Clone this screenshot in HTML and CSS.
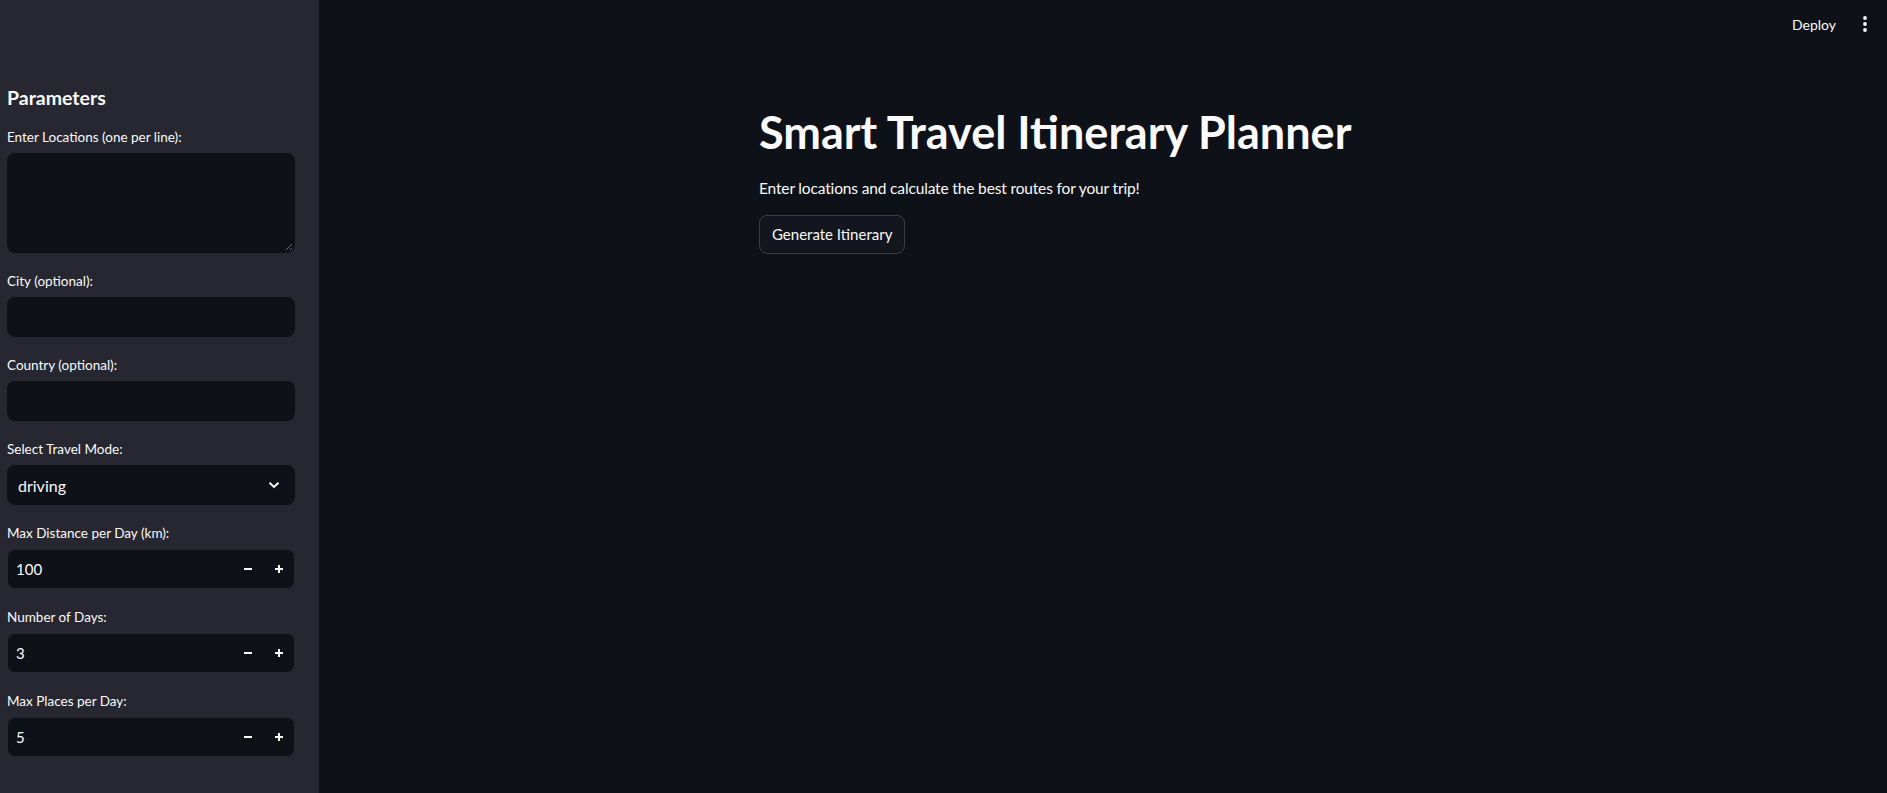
FILE: index.html
```html
<!DOCTYPE html>
<html lang="en">
<head>
<meta charset="utf-8">
<title>Smart Travel Itinerary Planner</title>
<link rel="stylesheet" href="styles.css">
</head>
<body>
<div class="app">
  <aside class="sidebar">
    <h2 class="side-title">Parameters</h2>
    <div class="fields">
      <div class="field">
        <label class="label">Enter Locations (one per line):</label>
        <div class="textarea"><span class="grip"></span></div>
      </div>
      <div class="field">
        <label class="label">City (optional):</label>
        <div class="input"></div>
      </div>
      <div class="field">
        <label class="label">Country (optional):</label>
        <div class="input"></div>
      </div>
      <div class="field">
        <label class="label">Select Travel Mode:</label>
        <div class="input select">
          <span class="select-value">driving</span>
          <svg class="chevron" width="12" height="8" viewBox="0 0 12 8"><path d="M1.5 1.8 L6 6 L10.5 1.8" fill="none" stroke="#fafafa" stroke-width="2"/></svg>
        </div>
      </div>
      <div class="field">
        <label class="label">Max Distance per Day (km):</label>
        <div class="number">
          <span class="num-value">100</span>
          <span class="step"><svg width="10" height="10" viewBox="0 0 10 10"><rect x="1" y="4" width="8" height="2" fill="#fafafa"/></svg></span>
          <span class="step"><svg width="10" height="10" viewBox="0 0 10 10"><rect x="1" y="4" width="8" height="2" fill="#fafafa"/><rect x="4" y="1" width="2" height="8" fill="#fafafa"/></svg></span>
        </div>
      </div>
      <div class="field">
        <label class="label">Number of Days:</label>
        <div class="number">
          <span class="num-value">3</span>
          <span class="step"><svg width="10" height="10" viewBox="0 0 10 10"><rect x="1" y="4" width="8" height="2" fill="#fafafa"/></svg></span>
          <span class="step"><svg width="10" height="10" viewBox="0 0 10 10"><rect x="1" y="4" width="8" height="2" fill="#fafafa"/><rect x="4" y="1" width="2" height="8" fill="#fafafa"/></svg></span>
        </div>
      </div>
      <div class="field">
        <label class="label">Max Places per Day:</label>
        <div class="number">
          <span class="num-value">5</span>
          <span class="step"><svg width="10" height="10" viewBox="0 0 10 10"><rect x="1" y="4" width="8" height="2" fill="#fafafa"/></svg></span>
          <span class="step"><svg width="10" height="10" viewBox="0 0 10 10"><rect x="1" y="4" width="8" height="2" fill="#fafafa"/><rect x="4" y="1" width="2" height="8" fill="#fafafa"/></svg></span>
        </div>
      </div>
    </div>
  </aside>
  <main class="main">
    <header class="topbar">
      <span class="deploy">Deploy</span>
      <svg class="kebab" width="6" height="18" viewBox="0 0 6 18"><circle cx="3" cy="3" r="1.9" fill="#fafafa"/><circle cx="3" cy="9" r="1.9" fill="#fafafa"/><circle cx="3" cy="15" r="1.9" fill="#fafafa"/></svg>
    </header>
    <section class="content">
      <h1 class="title">Smart Travel Itinerary Planner</h1>
      <p class="subtitle">Enter locations and calculate the best routes for your trip!</p>
      <button class="btn">Generate Itinerary</button>
    </section>
  </main>
</div>
</body>
</html>
```
FILE: styles.css
```css
* { box-sizing: border-box; }
html, body { margin: 0; padding: 0; height: 100%; }
body {
  background: #0e1117;
  color: #fafafa;
  font-family: "Lato", "Noto Sans", sans-serif;
  overflow: hidden;
}
.app { display: flex; height: 100vh; }
.sidebar {
  width: 319px;
  flex: 0 0 319px;
  background: #262730;
  padding: 84px 24px 0 7px;
}
.side-title {
  margin: 0 0 15px 0;
  font-size: 19.5px;
  line-height: 28px;
  font-weight: 700;
}
.fields { display: flex; flex-direction: column; gap: 18px; }
.field { display: flex; flex-direction: column; }
.label {
  font-size: 13.5px;
  line-height: 21px;
  margin: 0 0 5px 0;
}
.textarea {
  height: 100px;
  background: #0e1117;
  border-radius: 8px;
  position: relative;
}
.grip {
  position: absolute;
  right: 3px; bottom: 3px;
  width: 9px; height: 9px;
  background: repeating-linear-gradient(135deg, transparent 0 2px, #6b6d75 2px 3px);
  clip-path: polygon(100% 0, 100% 100%, 0 100%);
}
.input {
  height: 40px;
  background: #0e1117;
  border-radius: 8px;
}
.select {
  display: flex;
  align-items: center;
  justify-content: space-between;
  padding: 0 15px 0 11px;
}
.select-value { font-size: 16px; }
.chevron { display: block; }
.number {
  height: 40px;
  background: #0e1117;
  border: 1px solid #262730;
  border-radius: 8px;
  display: flex;
  align-items: center;
  padding: 0 0 0 8px;
}
.num-value { flex: 1; font-size: 15px; }
.step {
  width: 31px;
  height: 32px;
  display: flex;
  align-items: center;
  justify-content: center;
}
.main { flex: 1; display: flex; flex-direction: column; }
.topbar {
  height: 48px;
  display: flex;
  align-items: center;
  justify-content: flex-end;
  gap: 26px;
  padding-right: 19px;
}
.deploy { font-size: 14px; }
.kebab { display: block; }
.content {
  width: 688px;
  margin: 0 auto;
  padding-top: 58px;
}
.title {
  margin: 0;
  font-size: 45px;
  line-height: 52.8px;
  font-weight: 700;
}
.subtitle {
  margin: 17px 0 15px;
  font-size: 15.5px;
  line-height: 24px;
  letter-spacing: -0.15px;
}
.btn {
  height: 39px;
  padding: 0 12px;
  background: #13161e;
  color: #fafafa;
  border: 1px solid #3a3d45;
  border-radius: 8px;
  font-family: inherit;
  font-size: 15px;
}
```
